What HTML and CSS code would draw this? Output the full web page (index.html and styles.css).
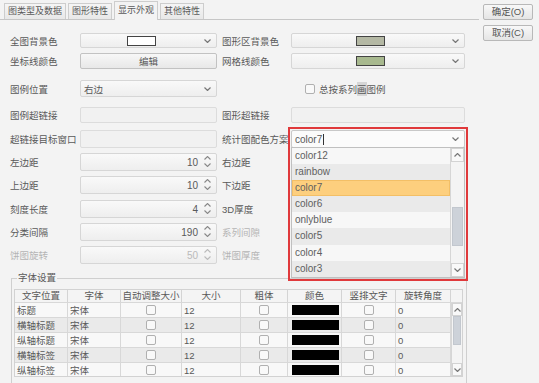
FILE: index.html
```html
<!DOCTYPE html>
<html lang="zh">
<head>
    <meta charset="UTF-8">
    <title>显示外观</title>
    <link rel="stylesheet" href="styles.css">
</head>
<body>
<div class="dialog">
    <div class="main">
        <div class="tabs">
            <div class="tab">图类型及数据</div>
            <div class="tab">图形特性</div>
            <div class="tab active">显示外观</div>
            <div class="tab">其他特性</div>
        </div>

        <div class="form">
            <div class="row r1">
                <span class="lbl">全图背景色</span>
                <div class="field combo"><span class="swatch sw-white"></span><svg class="chev" width="7" height="4" viewBox="0 0 7 4"><path d="M0.5 0.5L3.5 3.5L6.5 0.5" fill="none" stroke="#777" stroke-width="1.2"/></svg></div>
                <span class="lbl lbl-r">图形区背景色</span>
                <div class="field combo wide"><span class="swatch sw-gray"></span><svg class="chev" width="7" height="4" viewBox="0 0 7 4"><path d="M0.5 0.5L3.5 3.5L6.5 0.5" fill="none" stroke="#777" stroke-width="1.2"/></svg></div>
            </div>
            <div class="row r2">
                <span class="lbl">坐标线颜色</span>
                <div class="field button">编辑</div>
                <span class="lbl lbl-r">网格线颜色</span>
                <div class="field combo wide"><span class="swatch sw-green"></span><svg class="chev" width="7" height="4" viewBox="0 0 7 4"><path d="M0.5 0.5L3.5 3.5L6.5 0.5" fill="none" stroke="#777" stroke-width="1.2"/></svg></div>
            </div>
            <div class="row r3">
                <span class="lbl">图例位置</span>
                <div class="field combo text">右边<svg class="chev" width="7" height="4" viewBox="0 0 7 4"><path d="M0.5 0.5L3.5 3.5L6.5 0.5" fill="none" stroke="#777" stroke-width="1.2"/></svg></div>
                <span class="lbl lbl-r"></span>
                <div class="check-line"><span class="box"></span>总按系列<span class="sel">画</span>图例</div>
            </div>
            <div class="row r4">
                <span class="lbl">图例超链接</span>
                <div class="field input"></div>
                <span class="lbl lbl-r">图形超链接</span>
                <div class="field input wide"></div>
            </div>
            <div class="row r5">
                <span class="lbl">超链接目标窗口</span>
                <div class="field input"></div>
                <span class="lbl lbl-r">统计图配色方案</span>
                <div class="cwrap">
                    <div class="field combo wide open">color7<span class="caret"></span><svg class="chev" width="7" height="4" viewBox="0 0 7 4"><path d="M0.5 0.5L3.5 3.5L6.5 0.5" fill="none" stroke="#777" stroke-width="1.2"/></svg></div>
                    <div class="list">
                        <div class="items">
                            <div class="item">color12</div>
                            <div class="item">rainbow</div>
                            <div class="item picked">color7</div>
                            <div class="item">color6</div>
                            <div class="item">onlyblue</div>
                            <div class="item">color5</div>
                            <div class="item">color4</div>
                            <div class="item">color3</div>
                        </div>
                        <div class="vscroll list-scroll">
                            <div class="sbtn"><svg width="7" height="4" viewBox="0 0 7 4"><path d="M0.5 3.5L3.5 0.5L6.5 3.5" fill="none" stroke="#777" stroke-width="1.2"/></svg></div>
                            <div class="track"><div class="thumb"></div></div>
                            <div class="sbtn"><svg width="7" height="4" viewBox="0 0 7 4"><path d="M0.5 0.5L3.5 3.5L6.5 0.5" fill="none" stroke="#777" stroke-width="1.2"/></svg></div>
                        </div>
                    </div>
                    <div class="mark"></div>
                </div>
            </div>
            <div class="row r6">
                <span class="lbl">左边距</span>
                <div class="field spin">10<span class="arrows"><svg width="7" height="11" viewBox="0 0 7 11"><path d="M0.5 3.5L3.5 0.5L6.5 3.5M0.5 7.5L3.5 10.5L6.5 7.5" fill="none" stroke="#888" stroke-width="1.1"/></svg></span></div>
                <span class="lbl lbl-r">右边距</span>
                <div class="field spin wide">10</div>
            </div>
            <div class="row r7">
                <span class="lbl">上边距</span>
                <div class="field spin">10<span class="arrows"><svg width="7" height="11" viewBox="0 0 7 11"><path d="M0.5 3.5L3.5 0.5L6.5 3.5M0.5 7.5L3.5 10.5L6.5 7.5" fill="none" stroke="#888" stroke-width="1.1"/></svg></span></div>
                <span class="lbl lbl-r">下边距</span>
                <div class="field spin wide">10</div>
            </div>
            <div class="row r8">
                <span class="lbl">刻度长度</span>
                <div class="field spin">4<span class="arrows"><svg width="7" height="11" viewBox="0 0 7 11"><path d="M0.5 3.5L3.5 0.5L6.5 3.5M0.5 7.5L3.5 10.5L6.5 7.5" fill="none" stroke="#888" stroke-width="1.1"/></svg></span></div>
                <span class="lbl lbl-r">3D厚度</span>
                <div class="field spin wide">10</div>
            </div>
            <div class="row r9">
                <span class="lbl">分类间隔</span>
                <div class="field spin">190<span class="arrows"><svg width="7" height="11" viewBox="0 0 7 11"><path d="M0.5 3.5L3.5 0.5L6.5 3.5M0.5 7.5L3.5 10.5L6.5 7.5" fill="none" stroke="#888" stroke-width="1.1"/></svg></span></div>
                <span class="lbl lbl-r off">系列间隙</span>
                <div class="field spin wide">0</div>
            </div>
            <div class="row r10">
                <span class="lbl off">饼图旋转</span>
                <div class="field spin off">50<span class="arrows"><svg width="7" height="11" viewBox="0 0 7 11"><path d="M0.5 3.5L3.5 0.5L6.5 3.5M0.5 7.5L3.5 10.5L6.5 7.5" fill="none" stroke="#bbb" stroke-width="1.1"/></svg></span></div>
                <span class="lbl lbl-r off">饼图厚度</span>
                <div class="field spin wide">0</div>
            </div>

            <fieldset class="fontbox">
                <legend>字体设置</legend>
                <div class="ftable">
                    <div class="thead">
                        <div class="th">文字位置</div>
                        <div class="th">字体</div>
                        <div class="th">自动调整大小</div>
                        <div class="th">大小</div>
                        <div class="th">粗体</div>
                        <div class="th">颜色</div>
                        <div class="th">竖排文字</div>
                        <div class="th">旋转角度</div>
                        <div class="th last"></div>
                    </div>
                    <div class="tbody">
                        <div class="rows">
                            <div class="tr"><div class="td">标题</div><div class="td">宋体</div><div class="td c"><span class="box"></span></div><div class="td">12</div><div class="td c"><span class="box"></span></div><div class="td"><span class="black"></span></div><div class="td c"><span class="box"></span></div><div class="td">0</div></div>
                            <div class="tr"><div class="td">横轴标题</div><div class="td">宋体</div><div class="td c"><span class="box"></span></div><div class="td">12</div><div class="td c"><span class="box"></span></div><div class="td"><span class="black"></span></div><div class="td c"><span class="box"></span></div><div class="td">0</div></div>
                            <div class="tr"><div class="td">纵轴标题</div><div class="td">宋体</div><div class="td c"><span class="box"></span></div><div class="td">12</div><div class="td c"><span class="box"></span></div><div class="td"><span class="black"></span></div><div class="td c"><span class="box"></span></div><div class="td">0</div></div>
                            <div class="tr"><div class="td">横轴标签</div><div class="td">宋体</div><div class="td c"><span class="box"></span></div><div class="td">12</div><div class="td c"><span class="box"></span></div><div class="td"><span class="black"></span></div><div class="td c"><span class="box"></span></div><div class="td">0</div></div>
                            <div class="tr"><div class="td">纵轴标签</div><div class="td">宋体</div><div class="td c"><span class="box"></span></div><div class="td">12</div><div class="td c"><span class="box"></span></div><div class="td"><span class="black"></span></div><div class="td c"><span class="box"></span></div><div class="td">0</div></div>
                        </div>
                        <div class="vscroll">
                            <div class="sbtn"><svg width="7" height="4" viewBox="0 0 7 4"><path d="M0.5 3.5L3.5 0.5L6.5 3.5" fill="none" stroke="#777" stroke-width="1.2"/></svg></div>
                            <div class="track"><div class="thumb"></div></div>
                            <div class="sbtn"><svg width="7" height="4" viewBox="0 0 7 4"><path d="M0.5 0.5L3.5 3.5L6.5 0.5" fill="none" stroke="#777" stroke-width="1.2"/></svg></div>
                        </div>
                    </div>
                </div>
            </fieldset>
        </div>
    </div>

    <div class="side">
        <button class="btn">确定(O)</button>
        <button class="btn">取消(C)</button>
    </div>
</div>
</body>
</html>
```

FILE: styles.css
```css
* {
    box-sizing: border-box;
}
body {
    margin: 0;
    background: #f3f3f3;
    font-family: "Liberation Sans", "Noto Sans CJK SC", sans-serif;
    font-size: 9.5px;
    color: #595959;
}
.dialog {
    display: flex;
    width: 539px;
    height: 383px;
    overflow: hidden;
}
.main {
    width: 479px;
}
.side {
    display: flex;
    flex-direction: column;
    gap: 5px;
    padding: 4px 0 0 4px;
}
.btn {
    width: 50px;
    height: 16px;
    padding: 0;
    border: 1px solid #b8b8b8;
    border-radius: 2px;
    background: linear-gradient(#f8f8f8, #e5e5e5);
    font: inherit;
    color: #555;
    line-height: 14px;
}

/* tabs */
.tabs {
    display: flex;
    align-items: flex-end;
    gap: 2px;
    height: 20px;
    padding-left: 4px;
    border-bottom: 1px solid #c6c6c6;
}
.tab {
    height: 16px;
    padding: 0 3px;
    border: 1px solid #cdcdcd;
    border-bottom: none;
    background: linear-gradient(#f5f5f5, #e8e8e8);
    font-size: 9px;
    line-height: 15px;
    color: #5a5a5a;
}
.tab.active {
    height: 19px;
    margin-bottom: -1px;
    background: #f3f3f3;
    line-height: 17px;
}

/* form rows */
.form {
    padding: 13px 0 0 10px;
}
.row {
    display: flex;
    align-items: center;
    height: 18px;
    margin-top: 5px;
}
.r1 { height: 15px; margin-top: 0; }
.r2 { height: 16px; }
.r3 { height: 17px; margin-top: 11px; }
.r4 { height: 16px; margin-top: 10px; }
.r5 { margin-top: 7px; }
.r8 { margin-top: 6px; }
.lbl {
    width: 70px;
    white-space: nowrap;
}
.lbl-r {
    width: 69px;
    margin-left: 5px;
}
.off {
    color: #b5b5b5;
}
.field {
    position: relative;
    display: flex;
    align-items: center;
    width: 137px;
    height: 100%;
    border: 1px solid #d6d6d6;
    border-radius: 2px;
    background: linear-gradient(#f9f9f9, #eeeeee);
    white-space: nowrap;
}
.field.wide {
    width: 174px;
}
.combo {
    justify-content: center;
    padding-right: 15px;
}
.combo.text {
    justify-content: flex-start;
    padding-left: 3px;
}
.chev {
    position: absolute;
    right: 5px;
    top: 50%;
    margin-top: -2px;
}
.swatch {
    width: 29px;
    height: 10px;
    border: 1px solid #444;
}
.sw-white { background: #fff; }
.sw-gray { background: #b4b8a4; }
.sw-green { background: #a8b98f; }
.button {
    justify-content: center;
    border-color: #c2c2c2;
    background: linear-gradient(#f7f7f7, #e8e8e8);
}
.input {
    background: #f1f1f1;
    border-color: #dcdcdc;
}
.spin {
    justify-content: flex-end;
    padding-right: 18px;
    font-size: 10px;
}
.spin.off {
    color: #bababa;
}
.arrows {
    position: absolute;
    right: 5px;
    top: 50%;
    margin-top: -6px;
    height: 11px;
    display: flex;
}
.check-line {
    display: flex;
    align-items: center;
    padding-left: 14px;
}
.box {
    display: inline-block;
    width: 10px;
    height: 10px;
    border: 1px solid #b0b0b0;
    border-radius: 2px;
    background: #f9f9f9;
}
.check-line .box {
    margin-right: 4px;
}
.sel {
    background: #d6d6d6;
}

/* open colour scheme combo */
.cwrap {
    position: relative;
    height: 100%;
}
.combo.open {
    justify-content: flex-start;
    padding-left: 3px;
    background: #fbfbfb;
    border-color: #c8c8c8;
    font-size: 10px;
}
.caret {
    display: inline-block;
    width: 1px;
    height: 11px;
    margin-left: 1px;
    background: #333;
}
.list {
    position: absolute;
    left: 0;
    top: 17px;
    z-index: 2;
    display: flex;
    width: 174px;
    height: 131px;
    border: 1px solid #c0c0c0;
    background: #f7f7f7;
}
.items {
    flex: 1;
}
.item {
    height: 16.1px;
    padding-left: 3px;
    line-height: 16px;
    font-size: 10px;
    color: #606060;
}
.item:nth-child(even) {
    background: #eaeaea;
}
.item.picked {
    background: #fdcf7e;
    box-shadow: inset 0 0 0 1px #f3bf66;
}
.mark {
    position: absolute;
    left: -3px;
    top: -3px;
    z-index: 3;
    width: 180px;
    height: 154px;
    border: 2px solid #e0393b;
    pointer-events: none;
}

/* scrollbars */
.vscroll {
    display: flex;
    flex-direction: column;
    width: 14px;
    border-left: 1px solid #d6d6d6;
    background: #f4f4f4;
}
.sbtn {
    display: flex;
    align-items: center;
    justify-content: center;
    height: 14px;
    border: 1px solid #d3d3d3;
    background: #f9f9f9;
}
.track {
    position: relative;
    flex: 1;
}
.thumb {
    position: absolute;
    left: 1px;
    right: 1px;
    background: #cdd2d9;
    border: 1px solid #c2c7ce;
}
.list-scroll .thumb {
    top: 45px;
    height: 39px;
}
.tbody .thumb {
    top: 0;
    height: 29px;
}

/* font settings table */
.fontbox {
    margin: 8px 0 0 1px;
    width: 456px;
    height: 112px;
    min-width: 0;
    padding: 5px 3px 0 2px;
    border: 1px solid #cfcfcf;
}
.fontbox legend {
    margin-left: 3px;
    padding: 0 1px;
    line-height: 12px;
}
.ftable {
    width: 449px;
    border: 1px solid #d2d2d2;
    background: #f7f7f7;
}
.thead,
.tr {
    display: grid;
    grid-template-columns: 53px 53px 61px 59px 47px 54px 54px 55px;
}
.thead {
    grid-template-columns: 53px 53px 61px 59px 47px 54px 54px 55px 1fr;
    height: 13px;
    background: #f4f4f4;
    border-bottom: 1px solid #d8d8d8;
}
.th {
    border-right: 1px solid #d4d4d4;
    text-align: center;
    line-height: 12px;
}
.th.last {
    border-right: none;
}
.tbody {
    display: flex;
    height: 73px;
    overflow: hidden;
}
.rows {
    width: 436px;
}
.tr {
    height: 15px;
    border-bottom: 1px solid #d8d8d8;
    background: #f8f8f8;
}
.tr:nth-child(even) {
    background: #eaeaea;
}
.td {
    display: flex;
    align-items: center;
    padding-left: 2px;
    border-right: 1px solid #d8d8d8;
    white-space: nowrap;
}
.td.c {
    justify-content: center;
    padding-left: 0;
}
.black {
    width: 47px;
    height: 10px;
    margin-left: 2px;
    background: #000;
}
.tbody .vscroll {
    width: 13px;
}
.tbody .sbtn {
    height: 13px;
}
```
